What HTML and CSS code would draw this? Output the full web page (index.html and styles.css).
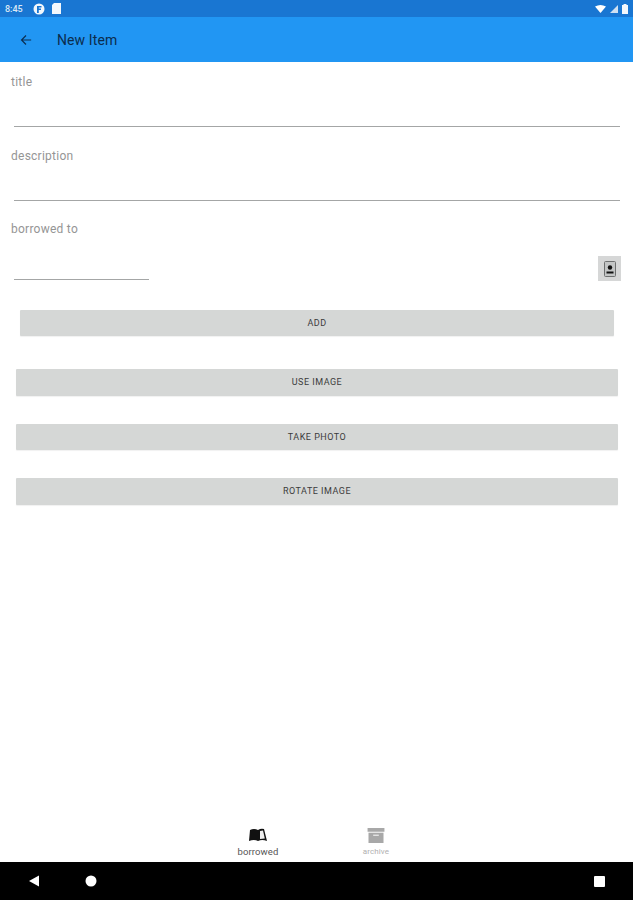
FILE: index.html
```html
<!DOCTYPE html>
<html lang="en">
<head>
<meta charset="utf-8">
<title>New Item</title>
<link rel="stylesheet" href="styles.css">
</head>
<body>
<div class="screen">
  <div class="status">
    <span class="time">8:45</span>
    <svg class="st-ic" width="12" height="12" viewBox="0 0 12 12"><circle cx="6" cy="6" r="5.5" fill="#f2f7fc"/><path d="M4 3h4.500v1.600H5.800v1h2.200v1.500H5.800V10H4z" fill="#1976d2"/></svg>
    <svg class="st-ic st-doc" width="9" height="11" viewBox="0 0 9 11"><path d="M2 0h7v11H0V2z" fill="#f2f7fc"/></svg>
    <span class="status-gap"></span>
    <svg class="st-ic" width="11" height="8" viewBox="0 0 11 8"><path d="M0 1.500Q5.500-1.500 11 1.500L5.500 8z" fill="#fff"/></svg>
    <svg class="st-ic" width="8" height="8" viewBox="0 0 8 8"><path d="M8 0v8H0z" fill="#cfe0f2"/></svg>
    <svg class="st-ic" width="6" height="10" viewBox="0 0 6 10"><path d="M1.500 0h3v1H6v9H0V1h1.500z" fill="#f2f7fc"/></svg>
  </div>
  <header class="appbar">
    <svg class="back" width="12" height="12" viewBox="0 0 14 14"><path d="M13 7H2M7 1.800 1.800 7 7 12.200" fill="none" stroke="#0b2f52" stroke-width="1.400"/></svg>
    <span class="appbar-title">New Item</span>
  </header>
  <main class="form">
    <div class="field">
      <label class="label">title</label>
      <div class="line"></div>
    </div>
    <div class="field">
      <label class="label">description</label>
      <div class="line"></div>
    </div>
    <div class="field field-last">
      <label class="label">borrowed to</label>
      <div class="contact-row">
        <div class="line line-short"></div>
        <button class="contact-btn" type="button" aria-label="contact">
          <svg width="12" height="16" viewBox="0 0 12 16"><path d="M1.500 .5h9a1 1 0 0 1 1 1v13a1 1 0 0 1-1 1h-9a1 1 0 0 1-1-1v-13a1 1 0 0 1 1-1z" fill="#c4c6c6" stroke="#6e7070"/><circle cx="6" cy="6.500" r="2.200" fill="#111"/><rect x="2.500" y="10.500" width="7" height="2" fill="#111"/></svg>
        </button>
      </div>
    </div>
    <button class="btn btn-add" type="button">ADD</button>
    <div class="actions">
      <button class="btn" type="button">USE IMAGE</button>
      <button class="btn" type="button">TAKE PHOTO</button>
      <button class="btn" type="button">ROTATE IMAGE</button>
    </div>
  </main>
  <nav class="tabs">
    <div class="tab">
      <svg width="18" height="14" viewBox="0 0 18 14"><path d="M1 2.500Q5 .5 9 2.500V13.500Q5 11.500 0 13.500z" fill="#111"/><path d="M9 2.500Q12 .5 15 1.500L18 13.500Q13 11.500 9 13.500z" fill="#111"/><path d="M11 3.500 14 3l1.800 8-4.800.5z" fill="#eee"/></svg>
      <span class="tab-label">borrowed</span>
    </div>
    <div class="tab tab-off">
      <svg width="18" height="16" viewBox="0 0 18 16"><rect x="0" y="0" width="18" height="4" fill="#a8a8a8"/><rect x="1" y="5" width="16" height="11" fill="#a8a8a8"/><rect x="6" y="7" width="6" height="1.500" fill="#e4e4e4"/></svg>
      <span class="tab-label">archive</span>
    </div>
  </nav>
  <div class="sysnav">
    <svg width="12" height="12" viewBox="0 0 12 12"><path d="M11 0.500V11.500L1 6z" fill="#fff"/></svg>
    <svg class="sys-home" width="12" height="12" viewBox="0 0 12 12"><circle cx="6" cy="6" r="5.500" fill="#fff"/></svg>
    <span class="sys-gap"></span>
    <svg width="11" height="11" viewBox="0 0 11 11"><rect width="11" height="11" rx="1" fill="#fff"/></svg>
  </div>
</div>
</body>
</html>
```
FILE: styles.css
```css
* { box-sizing: border-box; }
html, body { margin: 0; padding: 0; background: #fff; }
.screen {
  width: 633px;
  height: 900px;
  display: flex;
  flex-direction: column;
  overflow: hidden;
  font-family: Roboto, "Liberation Sans", sans-serif;
}
.status {
  height: 17px;
  background: #1976d2;
  display: flex;
  align-items: center;
  padding: 0 5px 0 5px;
  gap: 4px;
  flex: none;
}
.time { font-size: 9px; font-weight: 500; color: #dce9f6; margin-right: 4px; width: 20px; }
.st-doc { margin-left: 3px; }
.status-gap { flex: 1; }
.st-ic { display: block; }
.appbar {
  height: 45px;
  background: #2196f3;
  flex: none;
  display: flex;
  align-items: center;
  padding-left: 20px;
}
.back { display: block; }
.appbar-title {
  margin-left: 25px;
  font-size: 14px;
  color: #0c2c4c;
  letter-spacing: .1px;
}
.form { flex: 1; display: flex; flex-direction: column; }
.field { height: 74px; padding: 12px 13px 0 11px; display: flex; flex-direction: column; flex: none; }
.field-last { height: 71px; padding: 11px 12px 0 11px; }
.label { font-size: 12px; line-height: 16px; color: #959595; letter-spacing: .25px; height: 16px; }
.line { height: 1px; background: #a4a6a6; margin: 36px 0 0 3px; }
.contact-row { display: flex; align-items: flex-end; justify-content: space-between; height: 44px; }
.line-short { width: 135px; margin: 0 0 1px 3px; }
.contact-btn {
  width: 23px;
  height: 25px;
  padding: 0;
  border: 0;
  background: #d6d7d7;
  display: flex;
  align-items: center;
  justify-content: center;
}
.btn {
  display: block;
  height: 27px;
  width: 602px;
  margin: 0 0 0 16px;
  padding: 0;
  border: 0;
  border-radius: 1px;
  background: #d5d7d6;
  color: #3c3c3c;
  font-family: inherit;
  font-size: 9px;
  font-weight: 400;
  letter-spacing: .5px;
  box-shadow: 0 1px 1px rgba(0,0,0,.06);
}
.btn-add { width: 594px; height: 26px; margin: 29px 0 0 20px; flex: none; }
.actions { display: flex; flex-direction: column; gap: 28px; margin-top: 33px; }
.actions .btn { height: 26.5px; }
.tabs {
  height: 44px;
  flex: none;
  display: flex;
  justify-content: center;
  gap: 68px;
  padding-left: 1px;
}
.tab { width: 50px; display: flex; flex-direction: column; align-items: center; padding-top: 9px; gap: 4px; }
.tab svg { display: block; height: 15px; }
.tab-label { font-size: 9.5px; line-height: 11px; color: #555; letter-spacing: .1px; }
.tab-off { padding-top: 10px; gap: 3px; }
.tab-off .tab-label { font-size: 8px; color: #b0b0b0; }
.sysnav {
  height: 38px;
  background: #000;
  flex: none;
  display: flex;
  align-items: center;
  padding: 0 28px;
}
.sys-home { margin-left: 45px; }
.sys-gap { flex: 1; }
```
